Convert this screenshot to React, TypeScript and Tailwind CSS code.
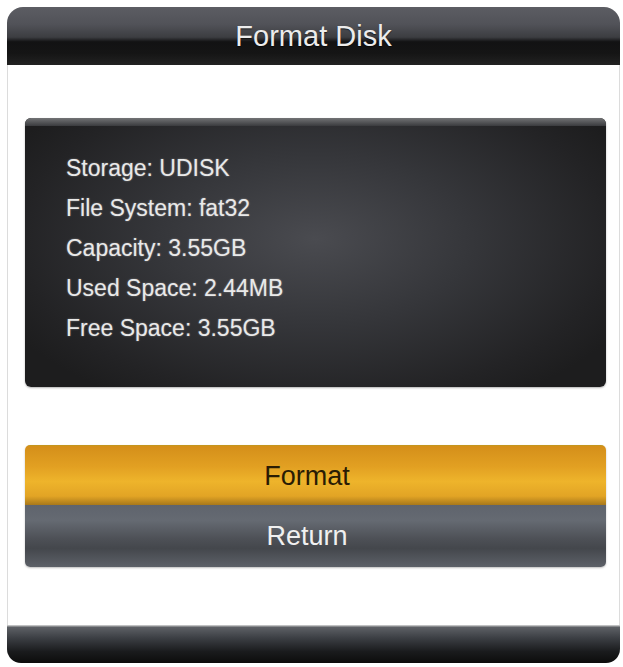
const rows = [
  "Storage: UDISK",
  "File System: fat32",
  "Capacity: 3.55GB",
  "Used Space: 2.44MB",
  "Free Space: 3.55GB",
];

export default function App() {
  return (
    <div className="w-[623px] h-[667px] bg-white pt-[7px] px-[7px] font-['Liberation_Sans',Arial,sans-serif]">
      <div className="flex flex-col w-[613px] h-[656px]">
        {/* title bar */}
        <div className="h-[58px] rounded-t-[16px] flex items-center justify-center bg-[linear-gradient(to_bottom,#5c5d63_0%,#515258_30%,#3c3d41_52%,#121213_60%,#151515_80%,#222222_100%)]">
          <span className="text-[29px] text-[#ececec] [text-shadow:0_1px_1px_rgba(0,0,0,0.6)] mt-[2px]">
            Format Disk
          </span>
        </div>

        <div className="flex-1 flex flex-col bg-white border-x border-[#dcdcdc] pl-[17px] pr-[13px]">
          {/* disk info panel */}
          <div className="mt-[53px] h-[269px] rounded-[6px] overflow-hidden flex flex-col bg-[radial-gradient(ellipse_60%_70%_at_50%_45%,#4a4b50_0%,#35363a_45%,#232325_85%,#1d1d1e_100%)] shadow-[0_1px_2px_rgba(0,0,0,0.3)]">
            <div className="h-[8px] bg-[linear-gradient(to_bottom,#727375,#3a3b3e)]" />
            <div className="pl-[41px] pt-[22px]">
              {rows.map((r) => (
                <div
                  key={r}
                  className="h-[40px] leading-[40px] text-[23px] text-[#e9e9e9] [text-shadow:0_0_2px_rgba(255,255,255,0.4)]"
                >
                  {r}
                </div>
              ))}
            </div>
          </div>

          {/* actions */}
          <div className="mt-[58px] flex flex-col rounded-[5px] overflow-hidden shadow-[0_1px_2px_rgba(0,0,0,0.25)]">
            <button className="h-[60px] flex items-center justify-center pr-[17px] text-[27px] text-[#2a1c04] border-t border-[#c4951d] bg-[linear-gradient(to_bottom,#d48f1a_0%,#e2a022_35%,#eeb42b_60%,#e2a425_85%,#a8781a_100%)]">
              <span className="mt-[1px]">Format</span>
            </button>
            <button className="h-[62px] flex items-center justify-center pr-[17px] text-[27px] text-[#f0f0f0] bg-[linear-gradient(to_bottom,#5f646d_0%,#656a72_25%,#4d5056_55%,#44474c_70%,#5d6168_100%)]">
              <span className="mt-[1px]">Return</span>
            </button>
          </div>

          <div className="flex-1" />
        </div>

        {/* bottom bar */}
        <div className="h-[38px] rounded-b-[14px] bg-[linear-gradient(to_bottom,#dcdcdc_0%,#5d6065_6%,#3b3e43_35%,#1a1b1d_70%,#0c0c0c_100%)]" />
      </div>
    </div>
  );
}
